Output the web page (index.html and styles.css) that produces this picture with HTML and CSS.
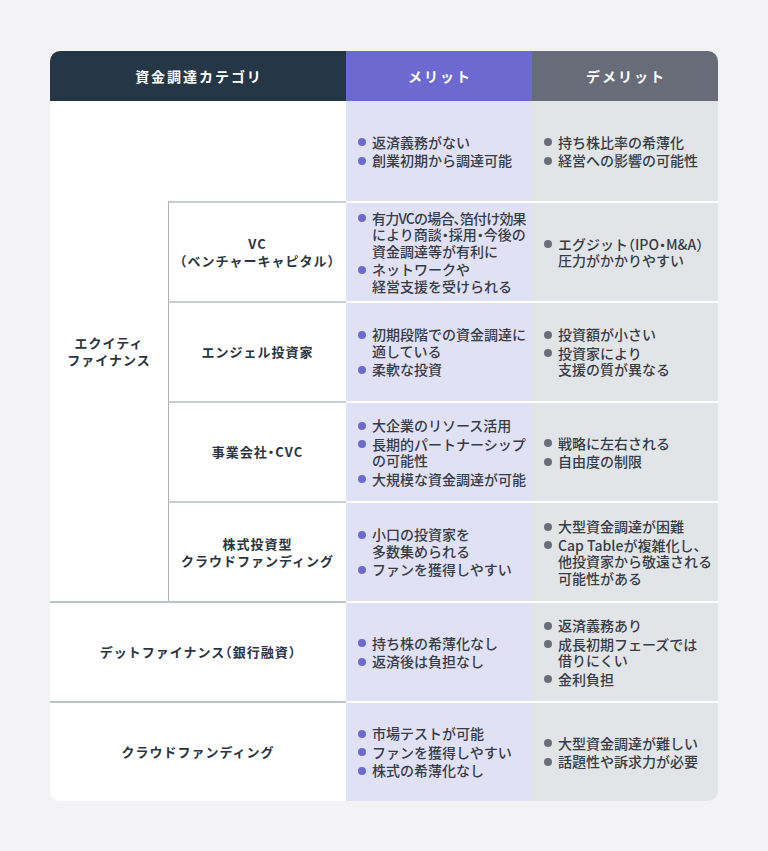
FILE: index.html
```html
<!DOCTYPE html>
<html lang="ja">
<head>
<meta charset="utf-8">
<title>資金調達カテゴリ</title>
<link rel="stylesheet" href="styles.css">
</head>
<body>
<div class="page">
  <div class="table">
    <div class="head head-cat">資金調達カテゴリ</div>
    <div class="head head-merit">メリット</div>
    <div class="head head-demerit">デメリット</div>

    <div class="label equity">エクイティ<br>ファイナンス</div>
    <div class="blank"></div>
    <div class="cell merit top"><ul><li>返済義務がない</li><li>創業初期から調達可能</li></ul></div>
    <div class="cell demerit top"><ul><li>持ち株比率の希薄化</li><li>経営への影響の可能性</li></ul></div>

    <div class="label sub">VC<br>（ベンチャーキャピタル）</div>
    <div class="cell merit"><ul><li><span><span class="tight">有力VCの場合、箔付け効果</span><br>により商談・採用・今後の<br>資金調達等が有利に</span></li><li><span>ネットワークや<br>経営支援を受けられる</span></li></ul></div>
    <div class="cell demerit"><ul><li><span>エグジット（IPO・M&amp;A）<br>圧力がかかりやすい</span></li></ul></div>

    <div class="label sub">エンジェル投資家</div>
    <div class="cell merit"><ul><li><span>初期段階での資金調達に<br>適している</span></li><li>柔軟な投資</li></ul></div>
    <div class="cell demerit"><ul><li>投資額が小さい</li><li><span>投資家により<br>支援の質が異なる</span></li></ul></div>

    <div class="label sub">事業会社・CVC</div>
    <div class="cell merit"><ul><li>大企業のリソース活用</li><li><span>長期的パートナーシップ<br>の可能性</span></li><li>大規模な資金調達が可能</li></ul></div>
    <div class="cell demerit"><ul><li>戦略に左右される</li><li>自由度の制限</li></ul></div>

    <div class="label sub">株式投資型<br>クラウドファンディング</div>
    <div class="cell merit"><ul><li><span>小口の投資家を<br>多数集められる</span></li><li>ファンを獲得しやすい</li></ul></div>
    <div class="cell demerit"><ul><li>大型資金調達が困難</li><li><span>Cap Tableが複雑化し、<br>他投資家から敬遠される<br>可能性がある</span></li></ul></div>

    <div class="label wide">デットファイナンス（銀行融資）</div>
    <div class="cell merit"><ul><li>持ち株の希薄化なし</li><li>返済後は負担なし</li></ul></div>
    <div class="cell demerit"><ul><li>返済義務あり</li><li><span>成長初期フェーズでは<br>借りにくい</span></li><li>金利負担</li></ul></div>

    <div class="label wide">クラウドファンディング</div>
    <div class="cell merit"><ul><li>市場テストが可能</li><li>ファンを獲得しやすい</li><li>株式の希薄化なし</li></ul></div>
    <div class="cell demerit"><ul><li>大型資金調達が難しい</li><li>話題性や訴求力が必要</li></ul></div>
  </div>
</div>
</body>
</html>
```
FILE: styles.css
```css
html, body {
  margin: 0;
  padding: 0;
  background: #f3f3f6;
}

body {
  font-family: "Noto Sans CJK JP", "Noto Sans", sans-serif;
  font-feature-settings: "halt";
  color: #363c46;
}

.page {
  padding: 51px 50px 50px 50px;
}

.table {
  display: grid;
  grid-template-columns: 118px 178px 186px 186px;
  grid-template-rows: 50px repeat(7, 100px);
  width: 668px;
  background: #ffffff;
  border-radius: 10px;
  overflow: hidden;
}

.head {
  display: flex;
  align-items: center;
  justify-content: center;
  color: #ffffff;
  font-size: 14px;
  font-weight: 700;
  letter-spacing: 0.14em;
  text-indent: 0.14em;
}

.head-cat {
  grid-column: span 2;
  background: #253746;
}

.head-merit {
  background: #6c6ad0;
}

.head-demerit {
  background: #686c78;
}

.label {
  display: flex;
  align-items: center;
  justify-content: center;
  text-align: center;
  font-size: 13px;
  font-weight: 700;
  letter-spacing: 1px;
  line-height: 17.5px;
  color: #2b3440;
  box-sizing: border-box;
}

.equity {
  grid-row: span 5;
}

.sub {
  border-left: 1px solid #a9b2bb;
  border-top: 2px solid #c8cdd3;
}

.wide {
  grid-column: span 2;
  border-top: 2px solid #bcc3ca;
}

.cell {
  display: flex;
  align-items: center;
  box-sizing: border-box;
  padding: 0 4px 0 12px;
  border-top: 2px solid #ffffff;
  font-size: 14px;
  font-weight: 500;
  line-height: 16.5px;
  white-space: nowrap;
}

.cell.top {
  border-top: 0;
}

.merit {
  background: #e1e1f5;
}

.demerit {
  background: #e2e5e8;
}

.cell ul {
  margin: 0;
  padding: 0;
  list-style: none;
}

.cell li {
  display: flex;
}

.cell li + li {
  margin-top: 2px;
}

.cell li::before {
  content: "";
  flex: none;
  width: 8px;
  height: 8px;
  margin: 4.5px 6px 0 0;
  border-radius: 50%;
}

.merit li::before {
  background: #6d6bd3;
}

.demerit li::before {
  background: #6b6e78;
}

.tight {
  letter-spacing: -0.8px;
}
```
